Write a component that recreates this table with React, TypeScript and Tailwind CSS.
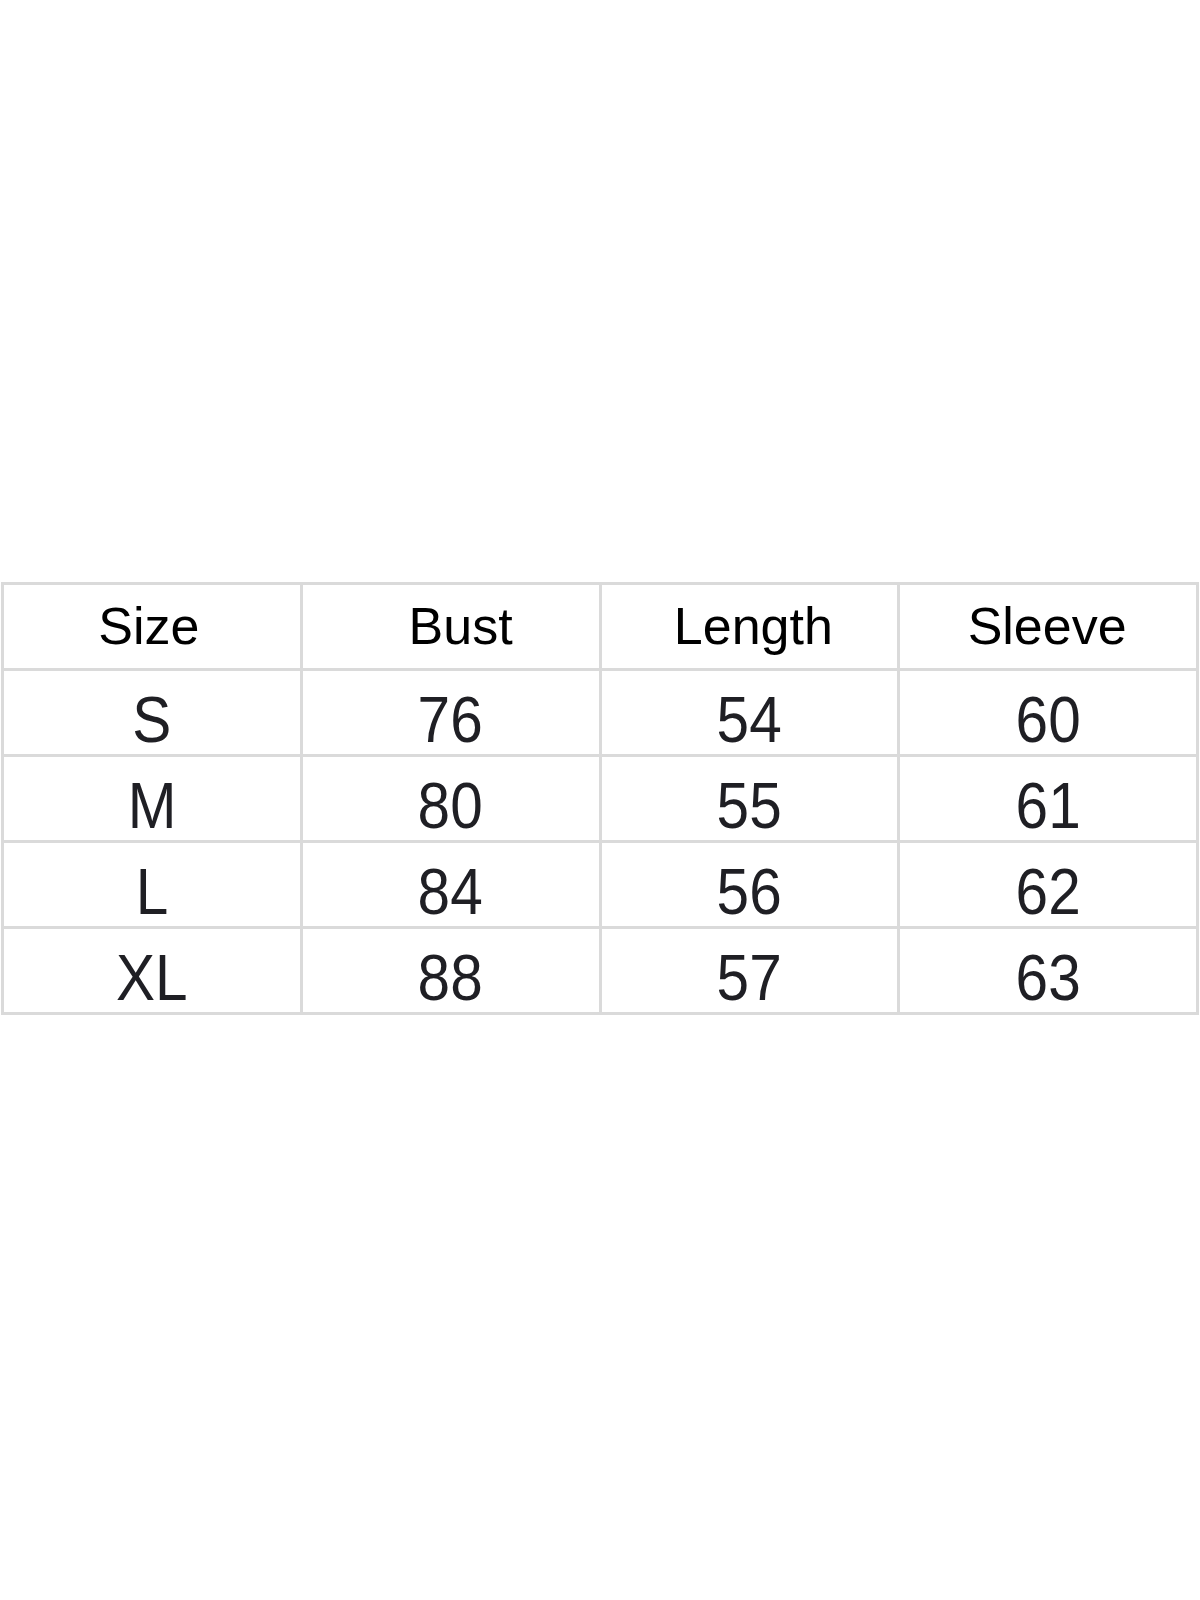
const header = ['Size', 'Bust', 'Length', 'Sleeve'];

// small per-column nudges so the headers sit where the source image has them
const headerPad = ['pr-[6px]', 'pl-[20px]', 'pl-[8px]', 'pr-[2px]'];

const rows = [
  ['S', '76', '54', '60'],
  ['M', '80', '55', '61'],
  ['L', '84', '56', '62'],
  ['XL', '88', '57', '63'],
];

export default function App() {
  return (
    <main className="min-h-[1600px] w-full bg-white pt-[582px] font-['Liberation_Sans',Arial,sans-serif]">
      <div className="ml-[1px] grid w-[1198px] grid-cols-4 gap-[3px] bg-[#dadada] p-[3px]">
        {header.map((h, i) => (
          <div
            key={h}
            className={`flex h-[83px] items-center justify-center bg-white pb-[2px] text-[52px] leading-none text-black ${headerPad[i]}`}
          >
            {h}
          </div>
        ))}
        {rows.map((r) =>
          r.map((v, i) => (
            <div key={r[0] + i} className="flex h-[83px] items-center justify-center bg-white pt-[13px]">
              <span className="inline-block scale-x-[0.9] text-[65px] leading-none text-[#1f1f24]">{v}</span>
            </div>
          )),
        )}
      </div>
    </main>
  );
}
